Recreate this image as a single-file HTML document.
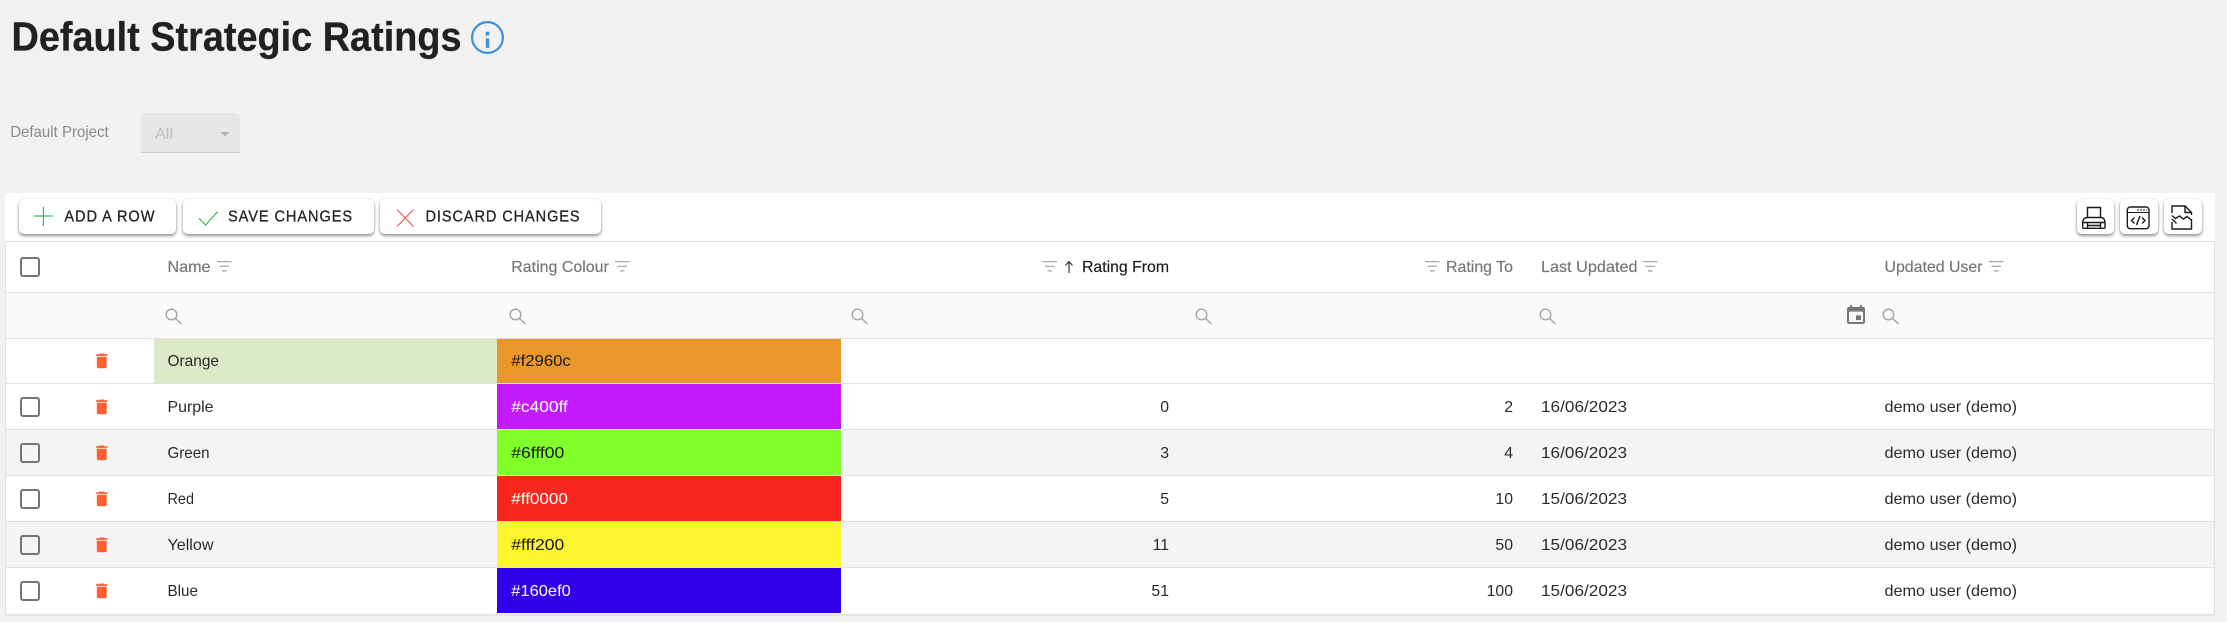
<!DOCTYPE html>
<html lang="en">
<head>
<meta charset="utf-8">
<title>Default Strategic Ratings</title>
<style>
html,body{margin:0;padding:0;width:2227px;height:622px;overflow:hidden;background:#f1f1f1;font-family:"Liberation Sans",sans-serif}
.a{position:absolute}
.btn{position:absolute;top:199px;height:35px;background:#fff;border-radius:5px;box-shadow:0 2px 3px rgba(0,0,0,.42),0 0 2px rgba(0,0,0,.12)}
svg{position:absolute;left:0;top:0}
text{font-family:"Liberation Sans",sans-serif;font-size:15.8px;fill:#2b2b2b}
.h{fill:#787878;stroke:#787878;stroke-width:.2}
.b{fill:#222;stroke:#222;stroke-width:.3;letter-spacing:1px}
.w{fill:#fff}
.n{text-anchor:end}
</style>
</head>
<body>
<div class="a" style="left:5px;top:193px;width:2210px;height:48px;background:#fff"></div>
<div class="a" style="left:141px;top:113px;width:99px;height:39px;background:#e6e6e6;border-bottom:1px solid #c9c9c9;border-radius:5px 5px 0 0"></div>
<div class="a" style="left:5px;top:241px;width:2209px;height:373px;background:#fff"></div>
<div class="a" style="left:5px;top:293px;width:2209px;height:45px;background:#fafafa"></div>
<div class="a" style="left:5px;top:430px;width:2209px;height:45px;background:#f4f4f4"></div>
<div class="a" style="left:5px;top:522px;width:2209px;height:45px;background:#f4f4f4"></div>
<div class="a" style="left:154px;top:339px;width:343px;height:44px;background:#dce9c7"></div>
<div class="a" style="left:497px;top:339px;width:344px;height:44px;background:#e9972a"></div>
<div class="a" style="left:497px;top:384px;width:344px;height:45px;background:#c41aff"></div>
<div class="a" style="left:497px;top:430px;width:344px;height:45px;background:#80ff2a"></div>
<div class="a" style="left:497px;top:476px;width:344px;height:45px;background:#f8261e"></div>
<div class="a" style="left:497px;top:522px;width:344px;height:45px;background:#fdf430"></div>
<div class="a" style="left:497px;top:568px;width:344px;height:45px;background:#3000e8"></div>
<div class="btn" style="left:19px;width:157px"></div>
<div class="btn" style="left:183px;width:191px"></div>
<div class="btn" style="left:380px;width:221px"></div>
<div class="btn" style="left:2077px;width:37px"></div>
<div class="btn" style="left:2120px;width:38px"></div>
<div class="btn" style="left:2164px;width:38px"></div>

<svg width="2227" height="622" viewBox="0 0 2227 622" xmlns="http://www.w3.org/2000/svg">
<defs>
<path id="tr" fill="#ff5f33" d="M6 19c0 1.100.9 2 2 2h8c1.100 0 2-.9 2-2V7H6v12zM19 4h-3.500l-1-1h-5l-1 1H5v2h14V4z"/>
<g id="cb"><rect x="1" y="1" width="18" height="18" rx="2" fill="none" stroke="#757575" stroke-width="2"/></g>
<g id="fl" stroke="#9e9e9e" stroke-width="1.200" fill="none"><path d="M0 .7H14.500M2.500 5.300H12M5 9.900H9.500"/></g>
<g id="se" fill="none" stroke="#a3a3a3" stroke-width="1.400"><circle cx="6.500" cy="6.500" r="5.300"/><path d="M10.500 10.500L16.500 16"/></g>
</defs>

<!-- table lines -->
<g fill="#e0e0e0">
<rect x="5" y="241" width="2210" height="1"/>
<rect x="5" y="292" width="2210" height="1"/>
<rect x="5" y="338" width="2210" height="1"/>
<rect x="5" y="383" width="2210" height="1"/>
<rect x="5" y="429" width="2210" height="1"/>
<rect x="5" y="475" width="2210" height="1"/>
<rect x="5" y="521" width="2210" height="1"/>
<rect x="5" y="567" width="2210" height="1"/>
<rect x="5" y="614" width="2210" height="1.500"/>
<rect x="5" y="241" width="1" height="374"/>
<rect x="2214" y="241" width="1" height="374"/>
</g>

<!-- title -->
<text x="11.500" y="50.500" textLength="450" lengthAdjust="spacingAndGlyphs" style="font-size:41px;font-weight:700;fill:#212121;stroke:#212121;stroke-width:.3">Default Strategic Ratings</text>
<circle cx="487.500" cy="37.500" r="15.400" fill="none" stroke="#3f8fd2" stroke-width="2.200"/>
<rect x="485.800" y="31.700" width="3.400" height="3.800" fill="#3f8fd2"/>
<rect x="485.800" y="38.300" width="3.400" height="9.500" fill="#3f8fd2"/>

<!-- default project -->
<text x="10.200" y="137" textLength="98.500" lengthAdjust="spacingAndGlyphs" style="fill:#8a8a8a">Default Project</text>
<text x="155" y="139" textLength="18" lengthAdjust="spacingAndGlyphs" style="fill:#bdbdbd">All</text>
<path d="M220.500 132H229.500L225 136.500Z" fill="#b5b5b5"/>

<!-- buttons -->
<path d="M34 216H52.700M43.400 206.700V226" stroke="#43b05c" stroke-width="1.200" fill="none"/>
<text x="64.400" y="221.700" textLength="91" lengthAdjust="spacingAndGlyphs" class="b">ADD A ROW</text>
<path d="M199 218.300L205.600 225L217.500 211.700" stroke="#43b05c" stroke-width="1.200" fill="none"/>
<text x="228" y="221.700" textLength="125" lengthAdjust="spacingAndGlyphs" class="b">SAVE CHANGES</text>
<path d="M397 209.500L413.500 226.500M413.500 209.500L397 226.500" stroke="#ee5f5b" stroke-width="1.200" fill="none"/>
<text x="425.500" y="221.700" textLength="155" lengthAdjust="spacingAndGlyphs" class="b">DISCARD CHANGES</text>

<!-- right toolbar icons -->
<g fill="none" stroke="#1a1a1a" stroke-width="1.400">
<path d="M2087.500 217V207.500H2100.500V217"/>
<path d="M2082.700 227.500V222.500C2082.700 219.500 2084.500 217.500 2087.500 217.500H2100.500C2103.500 217.500 2105 219.500 2105 222.500V227.500C2105 228 2104.500 228.300 2104 228.300H2083.500C2083 228.300 2082.700 228 2082.700 227.500Z"/>
<path d="M2083 222.500H2105M2087.500 222.500V228M2100.500 222.500V228M2087.500 225.500H2100.500"/>
<rect x="2127.300" y="207" width="21.700" height="21.700" rx="3"/>
<path d="M2128 212.500H2149" stroke-width="1"/>
<path d="M2137 210H2147" stroke-dasharray="2 1" stroke-width="1"/>
<path d="M2134.500 217.500L2131.500 220.500L2134.500 223.500M2142 217.500L2145 220.500L2142 223.500M2140 216L2136.500 225"/>
<path d="M2172 213V206H2185L2191.500 212.500V215M2191.500 219V222M2172 222V229H2191.500V222M2185 206V212.500H2191.500"/>
<path d="M2172 215.500L2175.500 218.500L2179.500 216L2183.500 219L2187 216.500L2191.500 220M2172 219L2176.500 223.500"/>
</g>

<!-- header -->
<use href="#cb" x="20" y="257"/>
<text x="167.500" y="272" textLength="43" lengthAdjust="spacingAndGlyphs" class="h">Name</text>
<use href="#fl" x="217" y="261"/>
<text x="511.300" y="272" textLength="97.500" lengthAdjust="spacingAndGlyphs" class="h">Rating Colour</text>
<use href="#fl" x="615" y="261"/>
<use href="#fl" x="1042.500" y="261"/>
<path d="M1069 273V262M1065.500 265.500L1069 261.500L1072.500 265.500" stroke="#333" stroke-width="1.200" fill="none"/>
<text x="1082" y="272" textLength="87" lengthAdjust="spacingAndGlyphs" style="fill:#212121;stroke:#212121;stroke-width:.2">Rating From</text>
<use href="#fl" x="1425" y="261"/>
<text x="1446" y="272" textLength="67" lengthAdjust="spacingAndGlyphs" class="h">Rating To</text>
<text x="1541" y="272" textLength="96.500" lengthAdjust="spacingAndGlyphs" class="h">Last Updated</text>
<use href="#fl" x="1643" y="261"/>
<text x="1884.500" y="272" textLength="98" lengthAdjust="spacingAndGlyphs" class="h">Updated User</text>
<use href="#fl" x="1989" y="261"/>

<!-- filter row -->
<use href="#se" x="165" y="308"/>
<use href="#se" x="509" y="308"/>
<use href="#se" x="851" y="308"/>
<use href="#se" x="1195" y="308"/>
<use href="#se" x="1539" y="308"/>
<use href="#se" x="1882" y="308"/>
<path transform="translate(1844 304) scale(1 .95)" fill="#757575" d="M17 12h-5v5h5v-5zM16 1v2H8V1H6v2H5c-1.110 0-1.990.9-1.990 2L3 19c0 1.100.89 2 2 2h14c1.100 0 2-.9 2-2V5c0-1.100-.9-2-2-2h-1V1h-2zm3 18H5V8h14v11z"/>

<!-- checkboxes -->
<use href="#cb" x="20" y="397"/>
<use href="#cb" x="20" y="443"/>
<use href="#cb" x="20" y="489"/>
<use href="#cb" x="20" y="535"/>
<use href="#cb" x="20" y="581"/>

<!-- delete icons -->
<use href="#tr" transform="translate(91.900 351) scale(.82)"/>
<use href="#tr" transform="translate(91.900 397) scale(.82)"/>
<use href="#tr" transform="translate(91.900 443) scale(.82)"/>
<use href="#tr" transform="translate(91.900 489) scale(.82)"/>
<use href="#tr" transform="translate(91.900 535) scale(.82)"/>
<use href="#tr" transform="translate(91.900 581) scale(.82)"/>

<!-- row 1 -->
<text x="167.500" y="366" textLength="51.500" lengthAdjust="spacingAndGlyphs">Orange</text>
<text x="511.300" y="366" textLength="59.500" lengthAdjust="spacingAndGlyphs" style="fill:#1a1a1a">#f2960c</text>
<!-- row 2 -->
<text x="167.500" y="412" textLength="46" lengthAdjust="spacingAndGlyphs">Purple</text>
<text x="511.300" y="412" textLength="56.500" lengthAdjust="spacingAndGlyphs" class="w">#c400ff</text>
<text x="1169" y="412" class="n">0</text>
<text x="1513" y="412" class="n">2</text>
<text x="1541" y="412" textLength="86" lengthAdjust="spacingAndGlyphs">16/06/2023</text>
<text x="1884.500" y="412" textLength="132.500" lengthAdjust="spacingAndGlyphs">demo user (demo)</text>
<!-- row 3 -->
<text x="167.500" y="458" textLength="42" lengthAdjust="spacingAndGlyphs">Green</text>
<text x="511.300" y="458" textLength="53" lengthAdjust="spacingAndGlyphs" style="fill:#1a1a1a">#6fff00</text>
<text x="1169" y="458" class="n">3</text>
<text x="1513" y="458" class="n">4</text>
<text x="1541" y="458" textLength="86" lengthAdjust="spacingAndGlyphs">16/06/2023</text>
<text x="1884.500" y="458" textLength="132.500" lengthAdjust="spacingAndGlyphs">demo user (demo)</text>
<!-- row 4 -->
<text x="167.500" y="504" textLength="26.500" lengthAdjust="spacingAndGlyphs">Red</text>
<text x="511.300" y="504" textLength="56.500" lengthAdjust="spacingAndGlyphs" class="w">#ff0000</text>
<text x="1169" y="504" class="n">5</text>
<text x="1513" y="504" class="n">10</text>
<text x="1541" y="504" textLength="86" lengthAdjust="spacingAndGlyphs">15/06/2023</text>
<text x="1884.500" y="504" textLength="132.500" lengthAdjust="spacingAndGlyphs">demo user (demo)</text>
<!-- row 5 -->
<text x="167.500" y="550" textLength="46" lengthAdjust="spacingAndGlyphs">Yellow</text>
<text x="511.300" y="550" textLength="53" lengthAdjust="spacingAndGlyphs" style="fill:#1a1a1a">#fff200</text>
<text x="1169" y="550" class="n">11</text>
<text x="1513" y="550" class="n">50</text>
<text x="1541" y="550" textLength="86" lengthAdjust="spacingAndGlyphs">15/06/2023</text>
<text x="1884.500" y="550" textLength="132.500" lengthAdjust="spacingAndGlyphs">demo user (demo)</text>
<!-- row 6 -->
<text x="167.500" y="596" textLength="30.500" lengthAdjust="spacingAndGlyphs">Blue</text>
<text x="511.300" y="596" textLength="59.500" lengthAdjust="spacingAndGlyphs" class="w">#160ef0</text>
<text x="1169" y="596" class="n">51</text>
<text x="1513" y="596" class="n">100</text>
<text x="1541" y="596" textLength="86" lengthAdjust="spacingAndGlyphs">15/06/2023</text>
<text x="1884.500" y="596" textLength="132.500" lengthAdjust="spacingAndGlyphs">demo user (demo)</text>
</svg>
</body>
</html>
